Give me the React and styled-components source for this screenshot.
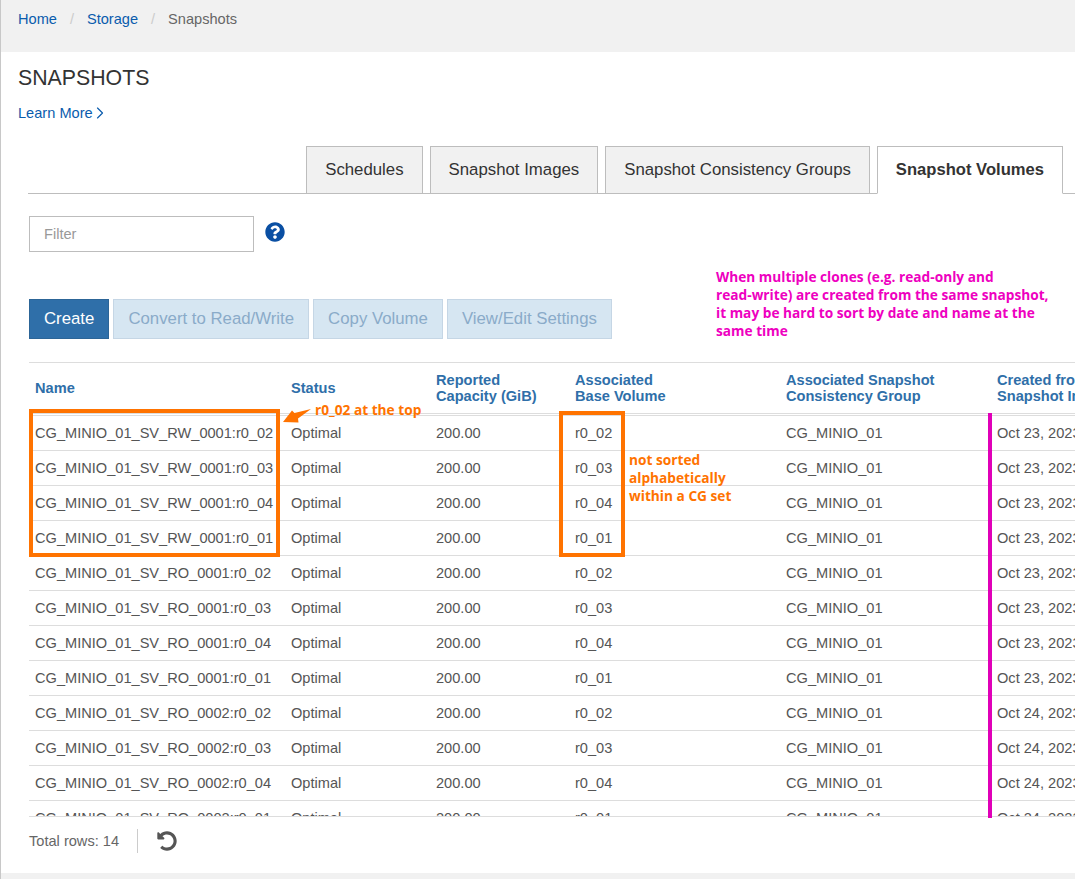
import React from 'react'
import styled, { createGlobalStyle } from 'styled-components'
import { FaQuestionCircle, FaUndoAlt } from 'react-icons/fa'
import { ChevronRight } from 'lucide-react'

const GlobalStyle = createGlobalStyle`
  html, body {
    margin: 0;
    padding: 0;
    height: 100%;
    overflow: hidden;
    background: #fff;
    font-family: "Liberation Sans", Arial, sans-serif;
  }
  * { box-sizing: border-box; }
`

const columns = '256px 145px 139px 211px 211px 300px'

const rows = [
  ['CG_MINIO_01_SV_RW_0001:r0_02', 'r0_02', 'Oct 23, 2023'],
  ['CG_MINIO_01_SV_RW_0001:r0_03', 'r0_03', 'Oct 23, 2023'],
  ['CG_MINIO_01_SV_RW_0001:r0_04', 'r0_04', 'Oct 23, 2023'],
  ['CG_MINIO_01_SV_RW_0001:r0_01', 'r0_01', 'Oct 23, 2023'],
  ['CG_MINIO_01_SV_RO_0001:r0_02', 'r0_02', 'Oct 23, 2023'],
  ['CG_MINIO_01_SV_RO_0001:r0_03', 'r0_03', 'Oct 23, 2023'],
  ['CG_MINIO_01_SV_RO_0001:r0_04', 'r0_04', 'Oct 23, 2023'],
  ['CG_MINIO_01_SV_RO_0001:r0_01', 'r0_01', 'Oct 23, 2023'],
  ['CG_MINIO_01_SV_RO_0002:r0_02', 'r0_02', 'Oct 24, 2023'],
  ['CG_MINIO_01_SV_RO_0002:r0_03', 'r0_03', 'Oct 24, 2023'],
  ['CG_MINIO_01_SV_RO_0002:r0_04', 'r0_04', 'Oct 24, 2023'],
  ['CG_MINIO_01_SV_RO_0002:r0_01', 'r0_01', 'Oct 24, 2023'],
]

const App = () => {
  return (
    <Page>
      <GlobalStyle />
      <Breadcrumb>
        <Crumb href="#">Home</Crumb>
        <Slash>/</Slash>
        <Crumb href="#">Storage</Crumb>
        <Slash>/</Slash>
        <CurrentCrumb>Snapshots</CurrentCrumb>
      </Breadcrumb>

      <TitleBlock>
        <Title>SNAPSHOTS</Title>
        <LearnMore href="#">
          Learn More
          <LearnChevron size={20} strokeWidth={1.4} />
        </LearnMore>
      </TitleBlock>

      <Content>
        <Tabs>
          <Tab>Schedules</Tab>
          <Tab>Snapshot Images</Tab>
          <Tab>Snapshot Consistency Groups</Tab>
          <Tab $active>Snapshot Volumes</Tab>
        </Tabs>

        <FilterRow>
          <FilterInput placeholder="Filter" />
          <HelpIcon><FaQuestionCircle size={20} /></HelpIcon>
        </FilterRow>

        <Toolbar>
          <PrimaryButton>Create</PrimaryButton>
          <DisabledButton>Convert to Read/Write</DisabledButton>
          <DisabledButton>Copy Volume</DisabledButton>
          <DisabledButton>View/Edit Settings</DisabledButton>
        </Toolbar>

        <TableClip>
          <HeadRow>
            <HeadCell>Name</HeadCell>
            <HeadCell>Status</HeadCell>
            <HeadCell>Reported<br />Capacity (GiB)</HeadCell>
            <HeadCell>Associated<br />Base Volume</HeadCell>
            <HeadCell>Associated Snapshot<br />Consistency Group</HeadCell>
            <HeadCell>Created from<br />Snapshot Image</HeadCell>
          </HeadRow>
          {rows.map((row) => (
            <Row key={row[0]}>
              <Cell>{row[0]}</Cell>
              <Cell>Optimal</Cell>
              <Cell>200.00</Cell>
              <Cell>{row[1]}</Cell>
              <Cell>CG_MINIO_01</Cell>
              <Cell>{row[2]}</Cell>
            </Row>
          ))}
        </TableClip>

        <Footer>
          <TotalRows>Total rows: 14</TotalRows>
          <FooterDivider />
          <RefreshIcon><FaUndoAlt size={20} /></RefreshIcon>
        </Footer>
      </Content>

      <BottomStrip />

      <NameBox />
      <BaseBox />
      <MagentaLine />
      <TopArrow viewBox="0 0 30 16" width="30" height="16">
        <polygon points="0,14 9,2.5 11.5,5 28,1 15,10.5 15.5,14.5" fill="#ff7300" />
      </TopArrow>
      <TopNote>r0_02 at the top</TopNote>
      <SortNote>not sorted<br />alphabetically<br />within a CG set</SortNote>
      <CloneNote>
        When multiple clones (e.g. read-only and<br />
        read-write) are created from the same snapshot,<br />
        it may be hard to sort by date and name at the<br />
        same time
      </CloneNote>
    </Page>
  )
}

const Page = styled.div`
  position: relative;
  display: flex;
  flex-direction: column;
  height: 879px;
  overflow: hidden;
  border-left: 1px solid #c8c8c8;
`

const Breadcrumb = styled.nav`
  display: flex;
  align-items: flex-start;
  height: 52px;
  padding: 11px 0 0 17px;
  background: #f1f1f1;
  font-size: 14.6px;
  line-height: 16px;
`

const Crumb = styled.a`
  color: #0a5cad;
  text-decoration: none;
`

const CurrentCrumb = styled.span`
  color: #666;
`

const Slash = styled.span`
  width: 30px;
  text-align: center;
  color: #ccc;
`

const TitleBlock = styled.header`
  display: flex;
  flex-direction: column;
  align-items: flex-start;
  height: 94px;
  padding: 14px 0 0 17px;
`

const Title = styled.h1`
  margin: 0;
  font-size: 21.3px;
  line-height: 24px;
  font-weight: 400;
  color: #333;
`

const LearnMore = styled.a`
  display: flex;
  align-items: center;
  margin-top: 13px;
  font-size: 14.6px;
  line-height: 16px;
  color: #0a5cad;
  text-decoration: none;
`

const LearnChevron = styled(ChevronRight)`
  margin-left: -3px;
`

const Content = styled.main`
  flex: 1;
  display: flex;
  flex-direction: column;
  min-height: 0;
  padding-left: 28px;
`

const Tabs = styled.div`
  display: flex;
  justify-content: flex-end;
  gap: 7px;
  height: 48px;
  padding-right: 12px;
  margin-left: -1px;
  border-bottom: 1px solid #bdbdbd;
`

const Tab = styled.div`
  display: flex;
  align-items: center;
  height: 48px;
  padding: 0 18px;
  border: 1px solid #bdbdbd;
  border-bottom: ${(p) => (p.$active ? '1px solid #fff' : '1px solid #bdbdbd')};
  background: ${(p) => (p.$active ? '#fff' : '#f1f1f1')};
  color: #333;
  font-size: ${(p) => (p.$active ? '16.6px' : '16.8px')};
  font-weight: ${(p) => (p.$active ? 700 : 400)};
`

const FilterRow = styled.div`
  display: flex;
  align-items: flex-start;
  gap: 11px;
  margin-top: 22px;
`

const FilterInput = styled.input`
  width: 225px;
  height: 36px;
  padding: 0 14px;
  border: 1px solid #bdbdbd;
  outline: none;
  font-family: inherit;
  font-size: 14.6px;
  color: #333;

  &::placeholder {
    color: #999;
    opacity: 1;
  }
`

const HelpIcon = styled.span`
  display: flex;
  margin-top: 6px;
  color: #0a4fa3;
`

const Toolbar = styled.div`
  display: flex;
  gap: 4px;
  margin-top: 47px;
`

const PrimaryButton = styled.button`
  height: 40px;
  padding: 0 14px;
  border: 1px solid #2c6597;
  background: #2f6fa9;
  color: #fff;
  font-family: inherit;
  font-size: 16.8px;
`

const DisabledButton = styled.button`
  height: 40px;
  padding: 0 14px;
  border: 1px solid #c5d6e5;
  background: #d6e6f2;
  color: #8aabc9;
  font-family: inherit;
  font-size: 16.8px;
`

const TableClip = styled.section`
  height: 455px;
  margin-top: 23px;
  overflow: hidden;
  border-top: 1px solid #ddd;
  border-bottom: 1px solid #ddd;
`

const HeadRow = styled.div`
  display: grid;
  grid-template-columns: ${columns};
  align-items: center;
  height: 53px;
  padding-bottom: 1px;
  border-bottom: 3px double #ddd;
`

const HeadCell = styled.div`
  padding-left: 6px;
  white-space: nowrap;
  font-size: 14.6px;
  line-height: 16px;
  font-weight: 700;
  color: #2f6fa9;
`

const Row = styled.div`
  display: grid;
  grid-template-columns: ${columns};
  align-items: center;
  height: 35px;
  border-bottom: 1px solid #ddd;
`

const Cell = styled.div`
  padding-left: 6px;
  white-space: nowrap;
  font-size: 14.6px;
  color: #555;
`

const Footer = styled.footer`
  display: flex;
  align-items: center;
  height: 56px;
  padding-bottom: 8px;
`

const TotalRows = styled.span`
  width: 108px;
  font-size: 14.6px;
  color: #666;
`

const FooterDivider = styled.span`
  width: 1px;
  height: 24px;
  background: #ccc;
`

const RefreshIcon = styled.span`
  display: flex;
  margin-left: 19px;
  color: #555;
`

const BottomStrip = styled.div`
  height: 6px;
  background: #f1f1f1;
`

const NameBox = styled.div`
  position: absolute;
  left: 28px;
  top: 409px;
  width: 251px;
  height: 148px;
  border: 4px solid #ff7300;
`

const BaseBox = styled.div`
  position: absolute;
  left: 558px;
  top: 411px;
  width: 66px;
  height: 146px;
  border: 4px solid #ff7300;
`

const MagentaLine = styled.div`
  position: absolute;
  left: 987px;
  top: 413px;
  width: 4px;
  height: 405px;
  background: #e000b8;
`

const TopArrow = styled.svg`
  position: absolute;
  left: 282px;
  top: 408px;
`

const Note = styled.div`
  position: absolute;
  font-family: "Open Sans", "Noto Sans", sans-serif;
  font-size: 13.7px;
  line-height: 18px;
  font-weight: 700;
  white-space: nowrap;
`

const TopNote = styled(Note)`
  left: 314px;
  top: 401px;
  color: #ff7300;
`

const SortNote = styled(Note)`
  left: 628px;
  top: 451px;
  color: #ff7300;
`

const CloneNote = styled(Note)`
  left: 715px;
  top: 268px;
  color: #ee00c0;
`

export default App
